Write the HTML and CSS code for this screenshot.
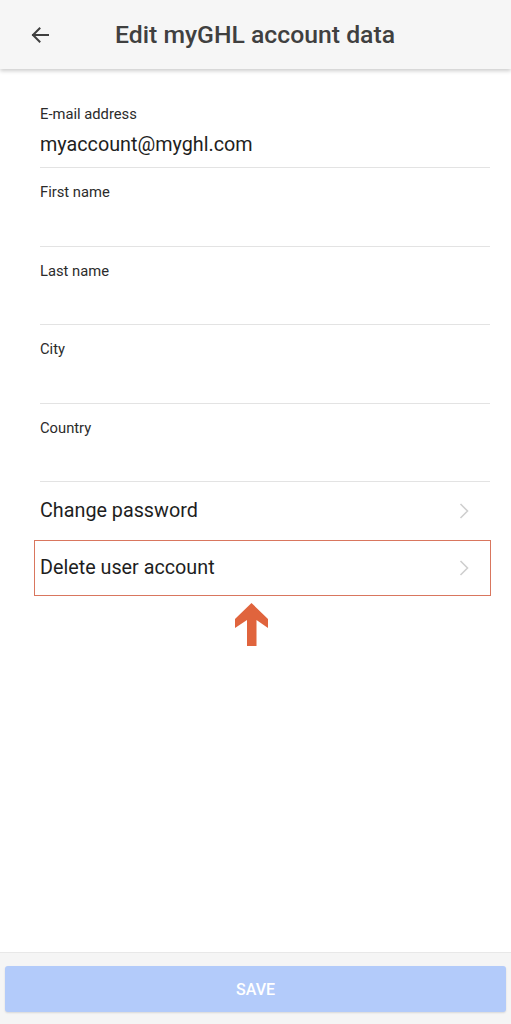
FILE: index.html
```html
<!DOCTYPE html>
<html lang="en">
<head>
<meta charset="utf-8">
<title>Edit myGHL account data</title>
<link rel="stylesheet" href="styles.css">
</head>
<body>
<div class="page">
  <header class="topbar">
    <span class="back">
      <svg width="24" height="24" viewBox="0 0 24 24"><path d="M20 12H5M11.5 5.5L5 12l6.5 6.5" fill="none" stroke="#404040" stroke-width="2" stroke-linecap="square"/></svg>
    </span>
    <h1 class="title">Edit myGHL account data</h1>
  </header>
  <main class="content">
    <div class="field">
      <div class="label">E-mail address</div>
      <div class="value">myaccount@myghl.com</div>
    </div>
    <div class="field">
      <div class="label">First name</div>
      <div class="value"></div>
    </div>
    <div class="field">
      <div class="label">Last name</div>
      <div class="value"></div>
    </div>
    <div class="field">
      <div class="label">City</div>
      <div class="value"></div>
    </div>
    <div class="field">
      <div class="label">Country</div>
      <div class="value"></div>
    </div>
    <div class="link-row">
      <span>Change password</span>
      <svg class="chev" width="10" height="16" viewBox="0 0 10 16"><path d="M1.5 1L8.5 8L1.5 15" fill="none" stroke="#cfcfcf" stroke-width="1.6"/></svg>
    </div>
    <div class="link-row highlight">
      <span>Delete user account</span>
      <svg class="chev" width="10" height="16" viewBox="0 0 10 16"><path d="M1.5 1L8.5 8L1.5 15" fill="none" stroke="#cfcfcf" stroke-width="1.6"/></svg>
    </div>
    <div class="pointer">
      <svg width="34" height="44" viewBox="0 0 34 44"><polygon points="16.5,0 33,16 33,25 21.5,17 21.5,43 12,43 12,17 0,25 0,16" fill="#e0643d"/></svg>
    </div>
  </main>
  <footer class="footer">
    <button class="save">SAVE</button>
  </footer>
</div>
</body>
</html>
```
FILE: styles.css
```css
html, body {
  margin: 0;
  padding: 0;
  background: #ffffff;
  font-family: Roboto, "Liberation Sans", Arial, sans-serif;
}
.page {
  display: flex;
  flex-direction: column;
  min-height: 100vh;
}
.topbar {
  height: 69px;
  background: #f6f6f6;
  display: flex;
  align-items: center;
  box-shadow: 0 2px 4px rgba(0, 0, 0, 0.2);
  position: relative;
  z-index: 1;
}
.back {
  display: flex;
  margin-left: 28px;
  width: 24px;
  height: 24px;
}
.title {
  margin: 0 0 0 63px;
  font-size: 24.75px;
  font-weight: 500;
  color: #404040;
}
.content {
  flex: 1;
  padding: 21px 21px 0 40px;
}
.field {
  padding: 15px 0 9.4px;
  border-bottom: 1px solid #e3e3e3;
}
.label {
  font-size: 14.75px;
  line-height: 19px;
  color: #2b2b2b;
}
.value {
  margin-top: 8px;
  height: 26px;
  font-size: 19.75px;
  line-height: 26px;
  color: #1e1e1e;
}
.link-row {
  height: 58px;
  display: flex;
  align-items: center;
  justify-content: space-between;
  font-size: 19.75px;
  color: #1e1e1e;
  padding-right: 21px;
}
.link-row .chev {
  display: block;
}
.highlight {
  margin: 0 -1px 0 -6px;
  padding: 0 21px 0 5px;
  border: 1.5px solid #d9765e;
  height: 54px;
}
.pointer {
  display: flex;
  padding: 7px 0 0 195px;
}
.footer {
  height: 72px;
  background: #f5f5f5;
  border-top: 1px solid #e8e8e8;
  display: flex;
  flex-direction: column;
  padding: 13px 5px 0;
  box-sizing: border-box;
}
.save {
  height: 46px;
  width: 100%;
  border: none;
  border-radius: 3px;
  background: #b3cbfa;
  color: #ffffff;
  font-family: Roboto, "Liberation Sans", Arial, sans-serif;
  font-size: 16px;
  font-weight: 500;
  box-shadow: 0 1px 2px rgba(0, 0, 0, 0.12);
}
```
